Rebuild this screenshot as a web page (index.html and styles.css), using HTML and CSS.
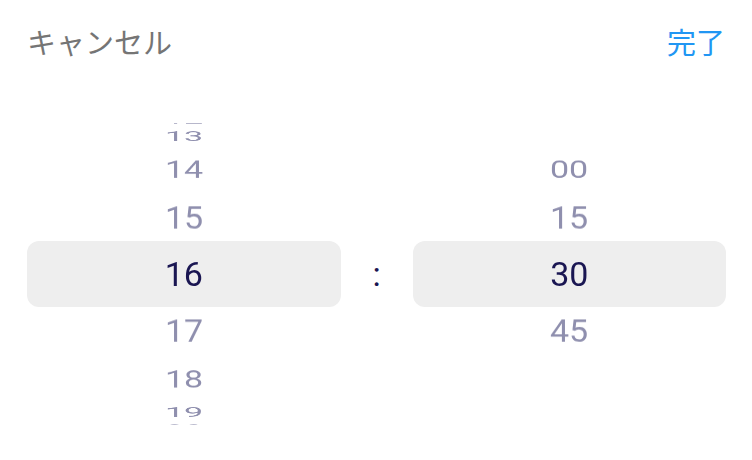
FILE: index.html
```html
<!DOCTYPE html>
<html lang="ja">
<head>
  <meta charset="UTF-8" />
  <meta name="viewport" content="width=device-width, initial-scale=1.0"/>
  <title>時刻の選択</title>
  <link rel="stylesheet" href="styles.css">
</head>
<body>

  <div class="header">
    <span class="cancel">キャンセル</span>
    <span class="done">完了</span>
  </div>

  <div class="picker">
    <div class="col">
      <div class="band"></div>
      <div class="item o-4">12</div>
      <div class="item o-3">13</div>
      <div class="item o-2">14</div>
      <div class="item o-1">15</div>
      <div class="item o0 selected">16</div>
      <div class="item o1">17</div>
      <div class="item o2">18</div>
      <div class="item o3">19</div>
      <div class="item o4">20</div>
    </div>

    <div class="colon">:</div>

    <div class="col">
      <div class="band"></div>
      <div class="item o-2">00</div>
      <div class="item o-1">15</div>
      <div class="item o0 selected">30</div>
      <div class="item o1">45</div>
    </div>
  </div>

</body>
</html>
```

FILE: styles.css
```css
* { box-sizing: border-box; }
body {
  margin: 0;
  background: #fff;
  font-family: 'Noto Sans CJK JP', 'Noto Sans', sans-serif;
}

.header {
  display: flex;
  justify-content: space-between;
  padding: 24px 27px 0 27px;
  font-size: 29px;
  line-height: 34px;
}
.cancel { color: #757575; }
.done { color: #2196f3; }

.picker {
  display: grid;
  grid-template-columns: 1fr 72px 1fr;
  padding: 0 26px 0 27px;
  margin-top: 56px;
}

/* each column stacks the band and the wheel items in one cell */
.col {
  display: grid;
  height: 320px;
}
.band {
  grid-area: 1 / 1;
  align-self: center;
  height: 66px;
  background: #eeeeee;
  border-radius: 12px;
}
.item {
  grid-area: 1 / 1;
  align-self: center;
  justify-self: center;
  font-family: Roboto, sans-serif;
  font-size: 34px;
  line-height: 40px;
  color: #8f8fae;
  backface-visibility: hidden;
}
.item.selected { color: #1a1652; }

.o-4 { transform: rotateX(88deg) translateZ(151px); }
.o-3 { transform: rotateX(66deg) translateZ(151px); }
.o-2 { transform: rotateX(44deg) translateZ(151px); }
.o-1 { transform: rotateX(22deg) translateZ(151px); }
.o0  { transform: translateZ(151px); }
.o1  { transform: rotateX(-22deg) translateZ(151px); }
.o2  { transform: rotateX(-44deg) translateZ(151px); }
.o3  { transform: rotateX(-66deg) translateZ(151px); }
.o4  { transform: rotateX(-88deg) translateZ(151px); }

.colon {
  align-self: center;
  text-align: center;
  font-family: Roboto, sans-serif;
  font-size: 34px;
  line-height: 40px;
  color: #1a1652;
}
```
